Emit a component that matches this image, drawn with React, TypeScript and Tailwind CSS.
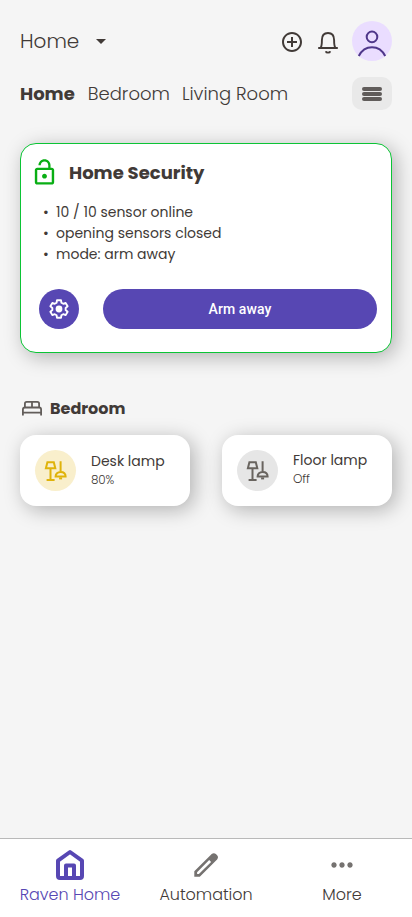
import type { ReactNode } from "react";
import {
  MdOutlineAddCircleOutline,
  MdArrowDropDown,
  MdLockOpen,
  MdMoreHoriz,
} from "react-icons/md";

type Lamp = {
  name: string;
  status: string;
  isOn: boolean;
};

const lamps: Lamp[] = [
  { name: "Desk lamp", status: "80%", isOn: true },
  { name: "Floor lamp", status: "Off", isOn: false },
];

const sensorInfo = ["10 / 10 sensor online", "opening sensors closed", "mode: arm away"];

const BellIcon = () => (
  <svg width="24" height="24" viewBox="0 0 24 24" fill="none" stroke="currentColor" strokeWidth="1.9">
    <path d="M2.2 18h19.6M4.6 18c1.3-2 1.3-4.5 1.3-8 0-4.2 2-7 6.1-7s6.1 2.8 6.1 7c0 3.500 0 6 1.300 8" />
    <path d="M9.800 21.200c.4 1.900 4 1.900 4.400 0" />
  </svg>
);

const AvatarIcon = () => (
  <svg width="40" height="40" viewBox="0 0 40 40" fill="none" stroke="#4f378a" strokeWidth="2">
    <circle cx="20" cy="15.9" r="5.3" />
    <path d="M6.8 35c2.700-5.400 7.400-8.800 13.200-8.800s10.500 3.400 13.200 8.800" />
  </svg>
);

const GearIcon = () => (
  <svg width="24" height="24" viewBox="-12 -12 24 24" fill="none" stroke="currentColor" strokeWidth="1.9" strokeLinejoin="round">
    <path d="M-2-8.800H2L2.400-6.300 4.260-5.230 6.620-6.130 8.620-2.670 6.660-1.070V1.070L8.620 2.670 6.620 6.130 4.260 5.230 2.400 6.300 2 8.800H-2L-2.400 6.300-4.260 5.230-6.620 6.130-8.620 2.670-6.660 1.070V-1.070L-8.620-2.670-6.620-6.130-4.260-5.230-2.400-6.300z" />
    <circle r="3.400" fill="currentColor" stroke="none" />
  </svg>
);

const BedIcon = () => (
  <svg width="20" height="15" viewBox="0 0 20 15" fill="none" stroke="currentColor" strokeWidth="1.8">
    <path d="M.9 14.500V8.500q0-2 2-2h14.200q2 0 2 2v6M.9 11.700h18.200M2.900 6.500V2.700q0-1.800 1.800-1.800h10.600q1.800 0 1.800 1.800v3.800M10 .9v5.600" />
  </svg>
);

const LampIcon = () => (
  <svg width="24" height="24" viewBox="0 0 24 24" fill="none" stroke="currentColor" strokeWidth="2">
    <path d="M3.400 3.300h6.400l1.500 5.900H1.900zM6.500 9v11M2.600 21h8M16.600 2.300v10" />
    <path d="M11.600 17.600c0-2.900 2-4.700 5-4.700s5 1.800 5 4.700z" />
    <path d="M15.100 19.400h3" />
  </svg>
);

const HouseIcon = () => (
  <svg width="30" height="32" viewBox="0 0 30 32" fill="none" stroke="currentColor" strokeWidth="4" strokeLinejoin="round">
    <path d="M3 11.700 15 3l12 8.700V27q0 2-2 2H5q-2 0-2-2z" />
    <path d="M11 29V16.500h8V29" />
  </svg>
);

const PencilIcon = () => (
  <svg width="32" height="32" viewBox="0 0 32 32" fill="#757270" fillRule="evenodd">
    <path d="M4.300 27.800v-5.600L21.700 5c1.300-1.100 3-1.100 4.200.1l1.200 1.200c1.200 1.200 1.200 2.900 0 4.100L9.800 27.800zM7.100 25.100h1.800l12.200-12.200-1.900-1.900L7.100 23.200z" />
  </svg>
);

const LampCard = ({ name, status, isOn }: Lamp) => (
  <div className="flex h-[71px] w-[170px] items-center rounded-2xl bg-white pl-[15px] shadow-[4px_4px_20px_rgba(0,0,0,0.28)]">
    <div
      className={
        isOn
          ? "flex size-[41px] items-center justify-center rounded-full bg-[#f9efcc] text-[#dfb30b]"
          : "flex size-[41px] items-center justify-center rounded-full bg-[#e6e6e6] text-[#69645f]"
      }
    >
      <LampIcon />
    </div>
    <div className={isOn ? "ml-[15px] pb-[2px]" : "ml-[15px] pb-1"}>
      <div className="text-[14px] leading-5">{name}</div>
      <div className="text-[12px] leading-[18px] font-light tracking-[-0.2px]">{status}</div>
    </div>
  </div>
);

const NavItem = ({ icon, label, active }: { icon: ReactNode; label: string; active?: boolean }) => (
  <div className={active ? "flex w-[136px] flex-col items-center text-[#5747b3]" : "flex w-[136px] flex-col items-center"}>
    <div className="flex h-8 items-center justify-center">{icon}</div>
    <span className="mt-[2px] text-base leading-6 font-light tracking-[-0.03px] whitespace-nowrap">{label}</span>
  </div>
);

const App = () => {
  return (
    <div className="flex h-[917px] w-[412px] flex-col bg-[#f5f5f5] font-['Poppins','Inter',sans-serif] text-[#413a37]">
      <header className="flex h-[61px] items-start pt-[21px] pr-5 pl-5">
        <div className="flex h-10 grow items-center">
          <span className="text-[20px] font-light">Home</span>
          <MdArrowDropDown className="ml-[10px] size-6" />
        </div>
        <div className="flex h-10 items-center">
          <MdOutlineAddCircleOutline className="mt-[2px] size-6" />
          <span className="mt-[2px] ml-3">
            <BellIcon />
          </span>
          <div className="-mt-[1px] ml-3 size-10 rounded-full bg-[#eaddff]">
            <AvatarIcon />
          </div>
        </div>
      </header>

      {/* Room tabs */}
      <nav className="mt-[16px] flex h-[33px] items-center px-5 text-[18px] font-light">
        <span className="font-bold">Home</span>
        <span className="ml-[13px]">Bedroom</span>
        <span className="ml-3">Living Room</span>
        <div className="ml-auto flex h-[33px] w-10 flex-col items-center justify-center gap-[1px] rounded-[10px] bg-[#e9e9e9]">
          <div className="h-1 w-5 rounded-full bg-[#605c5a]" />
          <div className="h-1 w-5 rounded-full bg-[#605c5a]" />
          <div className="h-1 w-5 rounded-full bg-[#605c5a]" />
        </div>
      </nav>

      {/* Security */}
      <section className="mx-5 mt-[33px] h-[210px] rounded-2xl border border-[#0bc435] bg-white shadow-[4px_4px_20px_rgba(0,0,0,0.28)]">
        <div className="mt-[14px] flex h-[29px] items-center pl-[9px]">
          <MdLockOpen className="size-[29px] text-[#09ae14]" />
          <h2 className="ml-[10px] text-[18px] font-bold">Home Security</h2>
        </div>
        <ul className="mt-[15px] ml-[22px] text-[14px] leading-[21px]">
          {sensorInfo.map((info) => (
            <li key={info} className="flex">
              <span className="w-[13px]">•</span>
              {info}
            </li>
          ))}
        </ul>
        <div className="mt-6 flex pr-[14px] pl-[18px]">
          <button className="flex size-10 items-center justify-center rounded-full bg-[#5747b3] text-white">
            <GearIcon />
          </button>
          <button className="ml-6 h-10 grow rounded-full bg-[#5747b3] font-['Roboto',sans-serif] text-[14px] font-medium tracking-[0.1px] text-white">
            Arm away
          </button>
        </div>
      </section>

      <section className="mx-5 mt-[44px]">
        <div className="flex h-6 items-center">
          <span className="mb-[2px] ml-[2px] text-[#625d5a]">
            <BedIcon />
          </span>
          <h3 className="ml-2 text-base font-bold">Bedroom</h3>
        </div>
        <div className="mt-[14px] flex justify-between">
          {lamps.map((lamp) => (
            <LampCard key={lamp.name} {...lamp} />
          ))}
        </div>
      </section>

      <footer className="mt-auto flex h-[79px] justify-center border-t border-[#b9b9b9] bg-white pt-[10px]">
        <NavItem icon={<HouseIcon />} label="Raven Home" active />
        <NavItem icon={<PencilIcon />} label="Automation" />
        <NavItem icon={<MdMoreHoriz className="size-8 text-[#757270]" />} label="More" />
      </footer>
    </div>
  );
};

export default App;
